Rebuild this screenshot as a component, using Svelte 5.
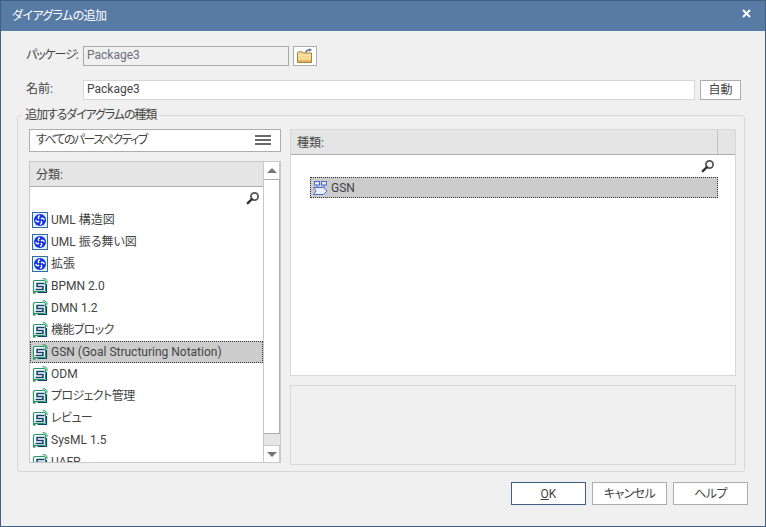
<script>
  const cats = [
    { t: 'UML 構造図', k: 'u' },
    { t: 'UML 振る舞い図', k: 'u' },
    { t: '拡張', k: 'u' },
    { t: 'BPMN 2.0', k: 'g' },
    { t: 'DMN 1.2', k: 'g' },
    { t: '機能ブロック', k: 'g', kana: true },
    { t: 'GSN (Goal Structuring Notation)', k: 'g', sel: true },
    { t: 'ODM', k: 'g' },
    { t: 'プロジェクト管理', k: 'g', kana: true },
    { t: 'レビュー', k: 'g', kana: true },
    { t: 'SysML 1.5', k: 'g' },
    { t: 'UAFP', k: 'g' }
  ];
</script>

{#snippet search()}
  <svg class="mag" width="14" height="14" viewBox="0 0 14 14">
    <circle cx="8.5" cy="5.5" r="3.6" fill="#fff" stroke="#555" stroke-width="1.8" />
    <path d="M6 8 1.8 12.2" stroke="#333" stroke-width="2.4" stroke-linecap="round" />
  </svg>
{/snippet}

<div class="dialog">
  <header class="title">
    <span class="tight">ダイアグラムの追加</span>
    <svg class="close" width="9" height="9" viewBox="0 0 9 9"><path d="M1 1 8 8M8 1 1 8" stroke="#fff" stroke-width="2" /></svg>
  </header>

  <div class="body">
    <div class="row pkg">
      <span class="lbl tighter">パッケージ:</span>
      <div class="input ro">Package3</div>
      <button class="folder" aria-label="選択">
        <svg width="18" height="16" viewBox="0 0 18 16">
          <path d="M9.5 4.5C10.5 2.5 12 1.8 14 1.8" fill="none" stroke="#5d6f92" stroke-width="1.4" />
          <path d="M13 .2 16 1.8 13.4 3.8Z" fill="#5d6f92" />
          <path d="M1.5 14.5V4.8L2.5 3.8H6L7 5H15.5V14.5Z" fill="#f7d98f" stroke="#a9803c" />
          <path d="M2 7.5H15V8H2Z" fill="#fff3cf" />
          <path d="M2 12H15V14H2Z" fill="#e3b463" />
        </svg>
      </button>
    </div>
    <div class="row name">
      <span class="lbl">名前:</span>
      <div class="input">Package3</div>
      <button class="auto">自動</button>
    </div>

    <fieldset class="group">
      <legend class="tighter">追加するダイアグラムの種類</legend>
      <div class="cols">
        <div class="left">
          <div class="combo">
            <span class="tightest">すべてのパースペクティブ</span>
            <span class="burger"><i></i><i></i><i></i></span>
          </div>
          <div class="list">
            <div class="listmain">
              <div class="lhead">分類:</div>
              <div class="searchrow">{@render search()}</div>
              {#each cats as c}
                <div class="item" class:sel={c.sel}>
                  {#if c.k === 'u'}
                    <svg class="ico" width="16" height="16" viewBox="0 0 16 16">
                      <rect x=".5" y=".5" width="15" height="15" fill="#e6eefb" stroke="#2f6f9f" />
                      <circle cx="8" cy="8" r="6" fill="#1433e6" />
                      <path d="M8 3.6C6.2 4.4 5.8 5.8 7 7M12.4 8C11.6 6.2 10.2 5.8 9 7M8 12.4C9.8 11.6 10.2 10.2 9 9M3.6 8C4.4 9.8 5.8 10.2 7 9" fill="none" stroke="#fff" stroke-width="1.4" />
                    </svg>
                  {:else}
                    <svg class="ico" width="16" height="16" viewBox="0 0 16 16">
                      <rect x="1.5" y="2.5" width="12" height="11" rx="1.5" fill="#fff" stroke="#1f9a63" stroke-width="1.2" />
                      <path d="M10.5 .8H13L15 2.6V5" fill="none" stroke="#1f9a63" />
                      <path d="M12.5 5.5H5V8.5H11V11.5H3.5" fill="none" stroke="#123f6e" stroke-width="1.5" />
                      <path d="M14.5 6V14.5H5.5" fill="none" stroke="#123f6e" stroke-width="1.2" />
                      <rect x="1" y="13" width="2.6" height="2.6" fill="#1f9a63" />
                    </svg>
                  {/if}
                  <span class:tight={c.kana}>{c.t}</span>
                </div>
              {/each}
            </div>
            <div class="sb">
              <div class="sbtn"><b class="up"></b></div>
              <div class="thumb"></div>
              <div class="track"></div>
              <div class="sbtn dn"><b class="down"></b></div>
            </div>
          </div>
        </div>

        <div class="right">
          <div class="types">
            <div class="thead"><span class="thl">種類:</span><span class="thr"></span></div>
            <div class="tsearch">{@render search()}</div>
            <div class="titem">
              <svg class="ico" width="16" height="16" viewBox="0 0 16 16">
                <g fill="#e8eefc" stroke="#4a6fd0">
                  <rect x="2.5" y="1.5" width="5" height="3.5" />
                  <rect x="9.5" y="1.5" width="5" height="3.5" />
                  <path d="M5 5V7.5M12 5V7.5M1.5 7.5H11.5L15 11 11.5 14.5H1.5L4 11Z" />
                </g>
              </svg>
              <span>GSN</span>
            </div>
          </div>
          <div class="desc"></div>
        </div>
      </div>
    </fieldset>

    <div class="actions">
      <button class="btn def"><u>O</u>K</button>
      <button class="btn tight">キャンセル</button>
      <button class="btn tight">ヘルプ</button>
    </div>
  </div>
</div>

<style>
  :global(body) { margin: 0; }
  .dialog {
    box-sizing: border-box;
    width: 766px;
    height: 527px;
    border: 1px solid #3f5f85;
    background: #f0f0f0;
    color: #444;
    font: 12px/16px Roboto, "Noto Sans CJK JP", sans-serif;
    font-feature-settings: "palt";
    display: flex;
    flex-direction: column;
    overflow: hidden;
  }
  .tight { letter-spacing: -0.6px; }
  .tighter { letter-spacing: -1.1px; }
  .tightest { letter-spacing: -1.6px; }
  .title {
    height: 30px;
    flex: none;
    background: #587ba5;
    color: #fff;
    display: flex;
    align-items: center;
    justify-content: space-between;
    padding: 0 14px 0 11px;
  }
  .close { margin-top: -6px; }
  .body { padding: 15px 16px 0 16px; flex: 1; display: flex; flex-direction: column; }
  .row { display: flex; align-items: stretch; height: 20px; }
  .pkg { padding-left: 9px; }
  .name { padding-left: 9px; margin-top: 14px; }
  .lbl { width: 57px; flex: none; line-height: 18px; white-space: nowrap; }
  .input {
    box-sizing: border-box;
    border: 1px solid #d6d6d6;
    background: #fff;
    line-height: 17px;
    padding-left: 3px;
    flex: 1;
    min-width: 0;
  }
  .ro {
    flex: 0 0 206px;
    background: #f0f0f0;
    border-color: #a9a9a9;
    color: #6d6d7d;
  }
  button {
    font: inherit;
    font-feature-settings: "palt";
    color: inherit;
    box-sizing: border-box;
    background: #fff;
    border: 1px solid #adadad;
    padding: 0;
  }
  .folder {
    flex: 0 0 24px;
    margin-left: 4px;
    display: flex;
    align-items: center;
    justify-content: center;
  }
  .auto { flex: 0 0 41px; margin-left: 5px; margin-right: 8px; }
  .group {
    box-sizing: border-box;
    margin: 7px 4px 0 0;
    height: 365px;
    min-width: 0;
    padding: 0 8px 0 11px;
    border: 1px solid #d7d7d7;
    border-radius: 3px;
  }
  legend {
    margin-left: -7px;
    padding: 0 3px;
    line-height: 16px;
  }
  .cols { display: flex; gap: 9px; margin-top: 6px; }
  .left { flex: 0 0 252px; display: flex; flex-direction: column; }
  .combo {
    box-sizing: border-box;
    height: 23px;
    width: 252px;
    border: 1px solid #adadad;
    background: #fff;
    display: flex;
    align-items: center;
    justify-content: space-between;
    padding: 0 9px 1px 6px;
  }
  .burger { display: flex; flex-direction: column; gap: 2px; }
  .burger i { display: block; width: 16px; height: 2px; background: #6a6a6a; }
  .list {
    box-sizing: border-box;
    margin-top: 9px;
    height: 302px;
    width: 252px;
    border: 1px solid #c9c9c9;
    background: #fff;
    display: flex;
  }
  .listmain { flex: 0 0 233px; overflow: hidden; }
  .lhead {
    box-sizing: border-box;
    height: 25px;
    background: #e5e5e5;
    border-bottom: 1px solid #adadad;
    padding: 1px 0 0 6px;
    line-height: 24px;
  }
  .searchrow { height: 22px; display: flex; justify-content: flex-end; align-items: center; padding-right: 3px; }
  .item {
    box-sizing: border-box;
    height: 22px;
    display: flex;
    align-items: center;
    gap: 3px;
    padding-left: 1px;
    border: 1px solid transparent;
    white-space: nowrap;
  }
  .item.sel { background: #cccccc; border: 1px dotted #333; }
  .ico { flex: none; }
  .sb { flex: 0 0 17px; display: flex; flex-direction: column; background: #e5e5e5; border-left: 1px solid #c9c9c9; box-sizing: border-box; }
  .sbtn {
    box-sizing: border-box;
    height: 17px;
    background: #fff;
    border-right: 1px solid #c9c9c9;
    display: flex;
    align-items: center;
    justify-content: center;
  }
  .sbtn.dn { border-top: 1px solid #c9c9c9; }
  .up, .down { width: 0; height: 0; border-left: 5px solid transparent; border-right: 5px solid transparent; }
  .up { border-bottom: 5px solid #777; }
  .down { border-top: 5px solid #777; }
  .thumb {
    box-sizing: border-box;
    height: 255px;
    background: #fff;
    border: 1px solid #adadad;
    border-left: 0;
  }
  .track { flex: 1; }
  .right { flex: 0 0 446px; display: flex; flex-direction: column; }
  .types {
    box-sizing: border-box;
    height: 247px;
    border: 1px solid #d7d7d7;
    background: #fff;
  }
  .thead {
    box-sizing: border-box;
    height: 25px;
    display: flex;
    background: #e5e5e5;
    border-bottom: 1px solid #adadad;
    line-height: 24px;
  }
  .thl { flex: 0 0 427px; padding: 1px 0 0 6px; box-sizing: border-box; border-right: 1px solid #c4c4c4; }
  .tsearch { height: 22px; display: flex; justify-content: flex-end; align-items: center; padding-right: 20px; }
  .titem {
    box-sizing: border-box;
    margin-left: 19px;
    width: 408px;
    height: 21px;
    background: #cccccc;
    border: 1px dotted #333;
    display: flex;
    align-items: center;
    gap: 3px;
    padding-left: 1px;
  }
  .desc {
    box-sizing: border-box;
    margin-top: 9px;
    height: 80px;
    border: 1px solid #d7d7d7;
  }
  .actions { display: flex; justify-content: flex-end; gap: 6px; margin-top: 10px; padding-right: 1px; }
  .btn { width: 75px; height: 23px; line-height: 20px; }
  .def { border-color: #3f5f85; }
</style>
